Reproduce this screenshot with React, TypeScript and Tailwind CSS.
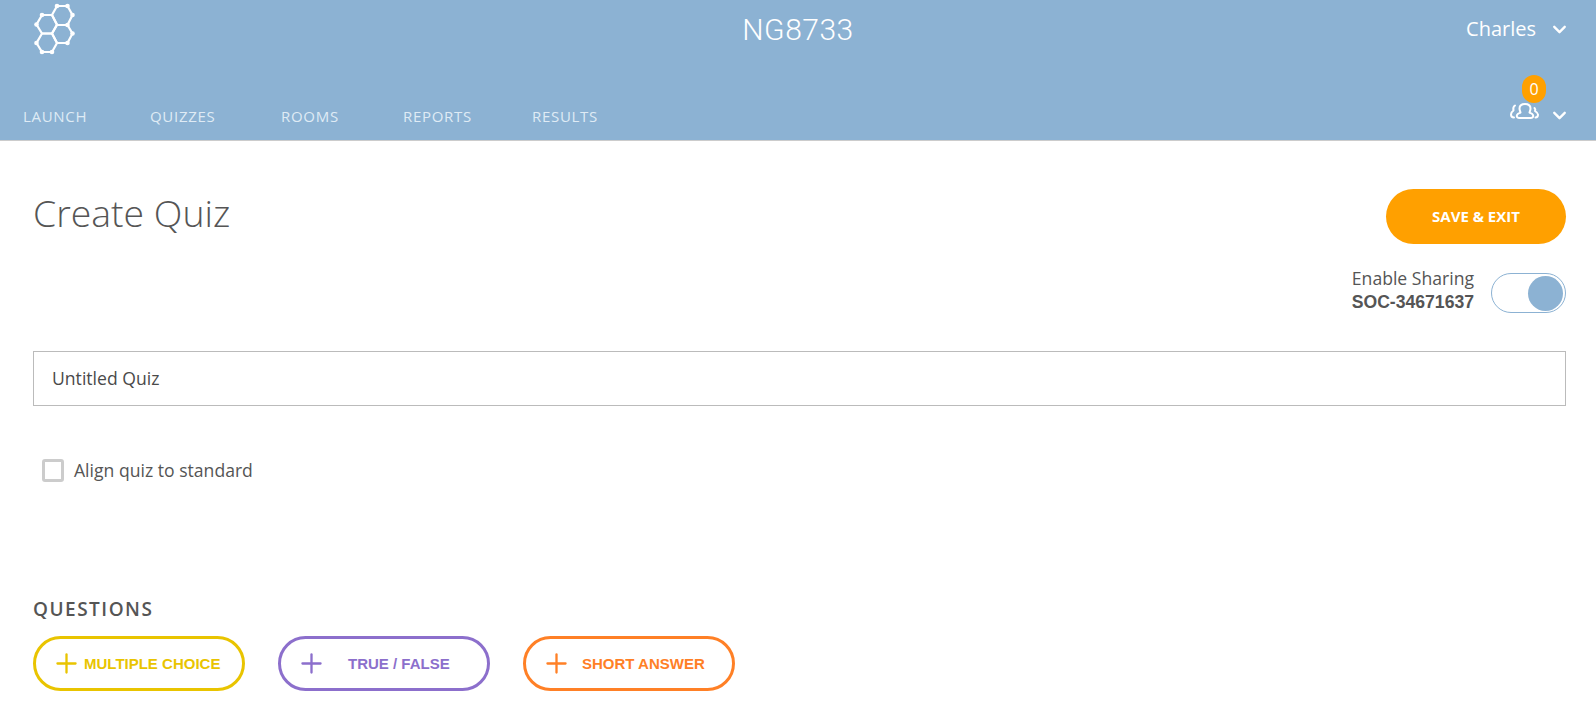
import { ChevronDown, Plus } from "lucide-react";

const navItems = [
  { label: "LAUNCH", width: "w-[127px]" },
  { label: "QUIZZES", width: "w-[131px]" },
  { label: "ROOMS", width: "w-[122px]" },
  { label: "REPORTS", width: "w-[129px]" },
  { label: "RESULTS", width: "w-auto" },
];

function Logo() {
  const hexes = [
    "M57 6h10.500l5 9-5 10H57l-5-10z",
    "M42 15h10l5 9.500-5 9H42l-5.500-9z",
    "M57 25h10.500l5 8.500-5 9.500H57l-5-9.500z",
    "M42 33.500h10l5 9.500-5 9H42l-5.500-9z",
  ];
  const dots = [
    [57, 6], [67.5, 6], [72.5, 15], [42, 15], [36.5, 24.5], [67.5, 25], [72.5, 33.5], [36.5, 43], [67.5, 43], [42, 52], [52, 52],
  ];
  return (
    <svg viewBox="30 0 48 56" className="h-[56px] w-[48px]" fill="none">
      {hexes.map((d) => (
        <path key={d} d={d} stroke="white" strokeWidth="2.2" />
      ))}
      {dots.map(([cx, cy]) => (
        <circle key={`${cx}-${cy}`} cx={cx} cy={cy} r="2.3" fill="white" />
      ))}
    </svg>
  );
}

function GroupIcon() {
  return (
    <svg viewBox="0 0 29 16" className="h-[16px] w-[29px]" fill="none" stroke="white" strokeWidth="2" strokeLinecap="round" strokeLinejoin="round">
      <path d="M9 15C7 15 6.500 13.500 7 12c.5-1.500 2.500-2 3.500-2.500C10 8 9.500 7 9.500 5.500 9.500 2.500 12 1 15 1s5.500 1.500 5.500 4.500c0 1.500-.5 2.500-1 4 1 .5 3 1 3.500 2.500.5 1.500 0 3-2 3z" />
      <path d="M5 2.500C3.500 3.500 3 5.500 3.500 7.500 2 8.500 1 10 1 11.500 1 13 2 14.500 4 14.500" />
      <path d="M24.500 5c1 1 1 2 .5 3 1.500 1 3 2 3 3.500 0 1.500-1 3-2.500 3" />
    </svg>
  );
}

function AddButton({ label, border, text, gap }: { label: string; border: string; text: string; gap: string }) {
  return (
    <button className={`flex h-[55px] w-[212px] items-center rounded-full border-[3px] bg-white pl-[15px] ${border} ${text} ${gap}`}>
      <Plus className="h-[31px] w-[31px] shrink-0" strokeWidth={1.8} />
      <span className="font-['Liberation_Sans',sans-serif] text-[15px] font-bold whitespace-nowrap">{label}</span>
    </button>
  );
}

export default function App() {
  return (
    <div className="min-h-[705px] overflow-hidden bg-white font-['Open_Sans',sans-serif] text-[#555555]">
      <header className="h-[141px] border-b border-[#cccccc] bg-[#8cb2d3]">
        <div className="grid h-[96px] grid-cols-3 items-start">
          <div className="justify-self-start pl-[30px]">
            <Logo />
          </div>
          <div className="justify-self-center pt-[7px] font-['Roboto',sans-serif] text-[30px] font-light tracking-[0.5px] text-white">NG8733</div>
          <div className="flex items-center gap-[13px] justify-self-end pr-[26px] pt-[14px] text-[20px] text-white">
            Charles
            <ChevronDown className="h-[21px] w-[21px]" strokeWidth={2.7} />
          </div>
        </div>
        <div className="flex h-[40px] items-center justify-between pr-[26px]">
          <nav className="flex pl-[23px] text-[15px] tracking-[0.7px] text-[#dfebf5]">
            {navItems.map((item) => (
              <a key={item.label} className={item.width}>
                {item.label}
              </a>
            ))}
          </nav>
          <div className="relative mb-[3px] flex items-start gap-[10px] text-white">
            <GroupIcon />
            <ChevronDown className="mt-[2px] h-[21px] w-[21px]" strokeWidth={2.7} />
            <span className="absolute left-[12px] top-[-28px] flex h-[28px] w-[24px] items-center justify-center rounded-full bg-[#ffa000] text-[16px]">0</span>
          </div>
        </div>
      </header>

      <main className="pl-[33px] pr-[30px]">
        <div className="flex items-start justify-between pt-[46px]">
          <h1 className="text-[37.4px] leading-[52px] font-light">Create Quiz</h1>
          <div className="mt-[2px] flex flex-col items-end">
            <button className="h-[55px] w-[180px] rounded-full bg-[#ffa000] text-[15px] font-bold text-white">SAVE &amp; EXIT</button>
            <div className="mt-[22px] flex items-center gap-[17px]">
              <div className="mb-[6px] text-right">
                <div className="text-[17.6px] leading-[24px]">Enable Sharing</div>
                <div className="font-['Liberation_Sans',sans-serif] text-[17.6px] leading-[24px] font-bold">SOC-34671637</div>
              </div>
              <div className="flex h-[40px] w-[75px] items-center justify-end rounded-full border border-[#8cb2d3] bg-white pr-[2px]">
                <span className="h-[35px] w-[35px] rounded-full bg-[#8cb2d3]" />
              </div>
            </div>
          </div>
        </div>

        <input
          readOnly
          value="Untitled Quiz"
          className="mt-[31px] block h-[55px] w-full border border-[#bbbbbb] px-[18px] pb-[2px] text-[17.6px] text-[#4a4a4a] outline-none"
        />

        <label className="mt-[51px] flex items-center gap-[10px] pl-[9px] text-[17.6px]">
          <span className="h-[23px] w-[22px] rounded-[3px] border-[3px] border-[#cccccc] bg-white" />
          Align quiz to standard
        </label>

        <h2 className="mt-[113px] text-[19px] leading-[26px] font-semibold tracking-[1.5px]">QUESTIONS</h2>
        <div className="mt-[14px] flex gap-[33px]">
          <AddButton label="MULTIPLE CHOICE" border="border-[#e9c400]" text="text-[#e9c400]" gap="gap-[2px]" />
          <AddButton label="TRUE / FALSE" border="border-[#8c6fcc]" text="text-[#8c6fcc]" gap="gap-[21px]" />
          <AddButton label="SHORT ANSWER" border="border-[#ff8026]" text="text-[#ff8026]" gap="gap-[10px]" />
        </div>
      </main>
    </div>
  );
}
